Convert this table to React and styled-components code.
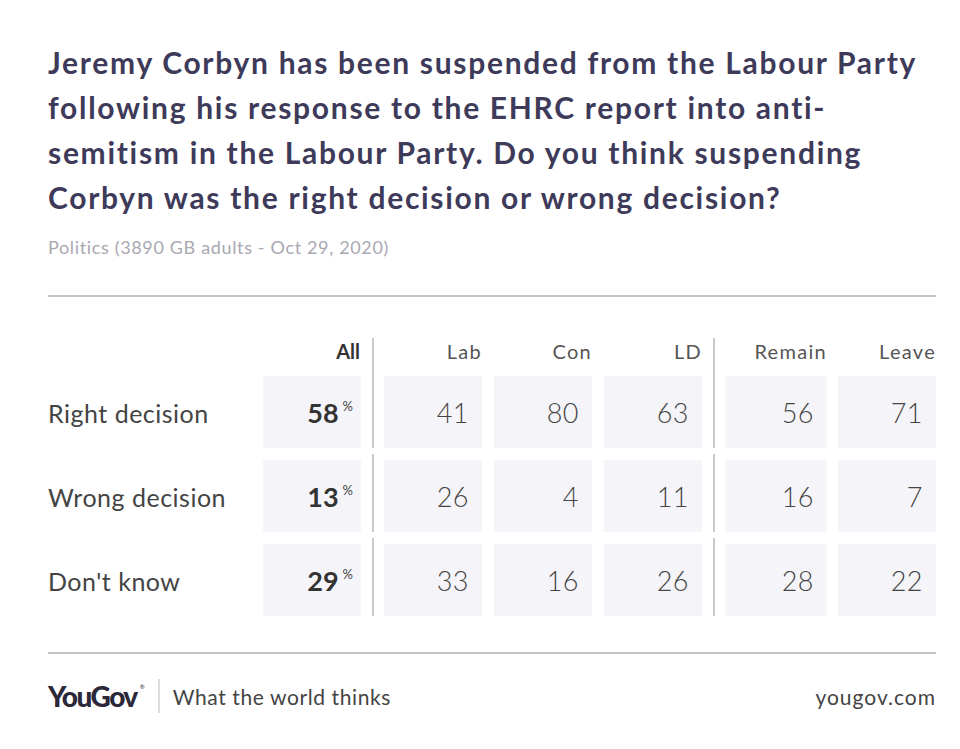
import React from 'react';
import styled, { createGlobalStyle } from 'styled-components';

const GlobalStyle = createGlobalStyle`
  html, body {
    margin: 0;
    padding: 0;
    background: #ffffff;
  }
  body {
    font-family: Lato, "Open Sans", sans-serif;
  }
`;

// 데이터
const columns = [
	{ key: 'lab', label: 'Lab' },
	{ key: 'con', label: 'Con' },
	{ key: 'ld', label: 'LD' },
];
const brexit = [
	{ key: 'remain', label: 'Remain', wide: true },
	{ key: 'leave', label: 'Leave' },
];

const rows = [
	{ label: 'Right decision', all: 58, lab: 41, con: 80, ld: 63, remain: 56, leave: 71 },
	{ label: 'Wrong decision', all: 13, lab: 26, con: 4, ld: 11, remain: 16, leave: 7 },
	{ label: "Don't know", all: 29, lab: 33, con: 16, ld: 26, remain: 28, leave: 22 },
];

function App() {
	return (
		<Page>
			<GlobalStyle />
			<Title>
				Jeremy Corbyn has been suspended from the Labour Party<br />
				following his response to the EHRC report into anti-<br />
				semitism in the Labour Party. Do you think suspending<br />
				Corbyn was the right decision or wrong decision?
			</Title>
			<Subtitle>Politics (3890 GB adults - Oct 29, 2020)</Subtitle>
			<Rule />

			<Table>
				<HeaderRow>
					<RowLabel />
					<HeadCell $bold>All</HeadCell>
					<Divider />
					<Group>
						{columns.map((c) => (
							<HeadCell key={c.key}>{c.label}</HeadCell>
						))}
					</Group>
					<Divider />
					<Group $gap={11}>
						{brexit.map((c) => (
							<HeadCell key={c.key} $wide={c.wide}>{c.label}</HeadCell>
						))}
					</Group>
				</HeaderRow>

				{rows.map((r) => (
					<BodyRow key={r.label}>
						<RowLabel>{r.label}</RowLabel>
						<Cell $total>
							{r.all}
							<Pct>%</Pct>
						</Cell>
						<Divider />
						<Group>
							{columns.map((c) => (
								<Cell key={c.key}>{r[c.key]}</Cell>
							))}
						</Group>
						<Divider />
						<Group $gap={11}>
							{brexit.map((c) => (
								<Cell key={c.key} $wide={c.wide}>{r[c.key]}</Cell>
							))}
						</Group>
					</BodyRow>
				))}
			</Table>

			<Rule />
			<Footer>
				<Brand>
					<Logo>
						YouGov<sup>®</sup>
					</Logo>
					<BrandSep />
					<Tagline>What the world thinks</Tagline>
				</Brand>
				<Site>yougov.com</Site>
			</Footer>
		</Page>
	);
}

const Page = styled.div`
  width: 960px;
  height: 749px;
  box-sizing: border-box;
  padding: 40px 24px 0 48px;
  background: #fff;
  overflow: hidden;
`;

const Title = styled.h1`
  margin: 0;
  font-size: 30px;
  line-height: 45px;
  font-weight: 700;
  color: #3e3a59;
  letter-spacing: 1.7px;
  white-space: nowrap;
`;

const Subtitle = styled.div`
  margin-top: 15px;
  font-size: 18px;
  line-height: 24px;
  color: #a9a8b2;
  font-weight: 400;
  letter-spacing: 0.65px;
`;

const Rule = styled.div`
  height: 2px;
  background: #c4c4c8;
  margin-top: 36px;
`;

const Table = styled.div`
  margin-top: 41px;
  display: flex;
  flex-direction: column;
  gap: 6px;
`;

const HeaderRow = styled.div`
  display: flex;
  height: 32px;
  margin-bottom: -6px;
`;

const BodyRow = styled.div`
  display: flex;
  height: 78px;
  align-items: flex-end;
`;

const RowLabel = styled.div`
  width: 215px;
  flex: none;
  align-self: stretch;
  display: flex;
  align-items: center;
  padding-top: 7px;
  box-sizing: border-box;
  font-size: 25px;
  color: #444;
  letter-spacing: 0.5px;
`;

const Group = styled.div`
  display: flex;
  gap: ${(p) => p.$gap || 12}px;
  height: 100%;
  align-items: flex-end;
`;

const Divider = styled.div`
  width: 23px;
  flex: none;
  align-self: stretch;
  display: flex;
  justify-content: center;
  &::before {
    content: '';
    width: 2px;
    background: #c9c9cd;
  }
`;

const HeadCell = styled.div`
  width: ${(p) => (p.$wide ? 102 : 98)}px;
  flex: none;
  align-self: flex-start;
  text-align: right;
  font-size: 20px;
  line-height: 26px;
  font-weight: ${(p) => (p.$bold ? 700 : 400)};
  color: ${(p) => (p.$bold ? '#333' : '#555')};
  letter-spacing: ${(p) => (p.$bold ? 0 : 1.3)}px;
  padding-right: ${(p) => (p.$bold ? 1 : 0)}px;
  box-sizing: border-box;
`;

const Cell = styled.div`
  width: ${(p) => (p.$wide ? 102 : 98)}px;
  height: 72px;
  flex: none;
  box-sizing: border-box;
  background: #f5f5f9;
  display: flex;
  align-items: center;
  justify-content: flex-end;
  padding-right: ${(p) => (p.$total ? 8 : 13)}px;
  font-size: 27px;
  font-weight: ${(p) => (p.$total ? 700 : 300)};
  color: ${(p) => (p.$total ? '#333' : '#444')};
  letter-spacing: ${(p) => (p.$total ? 0 : 0.5)}px;
`;

const Pct = styled.span`
  font-size: 13px;
  font-weight: 400;
  align-self: flex-start;
  margin-top: 22px;
  margin-left: 4px;
  color: #444;
`;

const Footer = styled.div`
  display: flex;
  align-items: center;
  justify-content: space-between;
  height: 84px;
`;

const Brand = styled.div`
  display: flex;
  align-items: center;
`;

const Logo = styled.div`
  font-size: 28px;
  font-weight: 900;
  color: #2b2839;
  letter-spacing: -1.5px;

  sup {
    font-size: 6px;
    font-weight: 400;
    vertical-align: top;
    position: relative;
    top: 4px;
    margin-left: 3px;
    letter-spacing: 0;
  }
`;

const BrandSep = styled.div`
  width: 2px;
  height: 34px;
  background: #dcdcdf;
  margin: 0 13px;
`;

const Tagline = styled.div`
  font-size: 21px;
  color: #444;
  letter-spacing: 0.6px;
`;

const Site = styled.div`
  font-size: 21px;
  color: #444;
  letter-spacing: 1px;
`;

export default App;
